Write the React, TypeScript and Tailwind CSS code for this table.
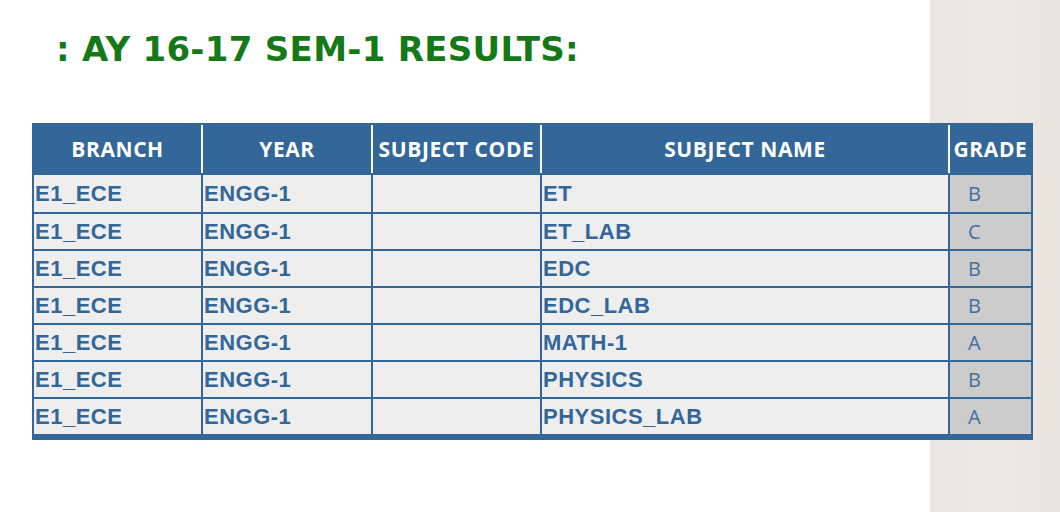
const rows = [
  { subject: 'ET', grade: 'B' },
  { subject: 'ET_LAB', grade: 'C' },
  { subject: 'EDC', grade: 'B' },
  { subject: 'EDC_LAB', grade: 'B' },
  { subject: 'MATH-1', grade: 'A' },
  { subject: 'PHYSICS', grade: 'B' },
  { subject: 'PHYSICS_LAB', grade: 'A' },
];

const headers = [
  { label: 'BRANCH', w: 'w-[167px]' },
  { label: 'YEAR', w: 'w-[170px] border-l-2 border-white' },
  { label: 'SUBJECT CODE', w: 'w-[169px] border-l-2 border-white' },
  { label: 'SUBJECT NAME', w: 'w-[408px] border-l-2 border-white' },
  { label: 'GRADE', w: 'w-[83px] border-l-2 border-white' },
];

export default function App() {
  return (
    <div className="w-[1060px] h-[512px] overflow-hidden bg-[linear-gradient(to_right,#ffffff_930px,#e9e6e4_930px,#ede8e3_1000px,#eae4df)]">
      <h1 className="pl-[56px] pt-[32px] text-[34px] leading-none font-semibold tracking-[0.3px] text-[#137a17] font-['DejaVu_Sans',sans-serif]">
        : AY 16-17 SEM-1 RESULTS:
      </h1>

      <div className="mt-[57px] ml-[32px] w-[1001px] border-2 border-b-[6px] border-[#336699] bg-[#eeeeee]">
        {/* header */}
        <div className="flex h-[50px] bg-[#336699] pb-[2px]">
          {headers.map((h) => (
            <div
              key={h.label}
              className={`${h.w} flex items-center justify-center pt-[2px] text-white font-bold text-[21px] tracking-[0.6px] font-['Open_Sans',sans-serif] whitespace-nowrap`}
            >
              {h.label}
            </div>
          ))}
        </div>

        {/* body */}
        {rows.map((r, i) => (
          <div
            key={i}
            className={`flex h-[37px] text-[#336699] font-['Liberation_Sans',Arial,sans-serif] text-[22px] ${i > 0 ? 'border-t-2 border-[#336699]' : ''}`}
          >
            <div className="w-[167px] flex items-center pl-[1px] font-bold tracking-[0.5px]">E1_ECE</div>
            <div className="w-[170px] flex items-center pl-[1px] border-l-2 border-[#336699] font-bold tracking-[0.5px]">ENGG-1</div>
            <div className="w-[169px] border-l-2 border-[#336699]"></div>
            <div className="w-[408px] flex items-center pl-[1px] border-l-2 border-[#336699] font-bold tracking-[0.5px]">{r.subject}</div>
            <div className="w-[83px] flex items-center pl-[18px] border-l-2 border-[#336699] bg-[#cccccc] text-[20px] text-[#41709f] font-['Open_Sans',sans-serif]">
              {r.grade}
            </div>
          </div>
        ))}
      </div>
    </div>
  );
}
